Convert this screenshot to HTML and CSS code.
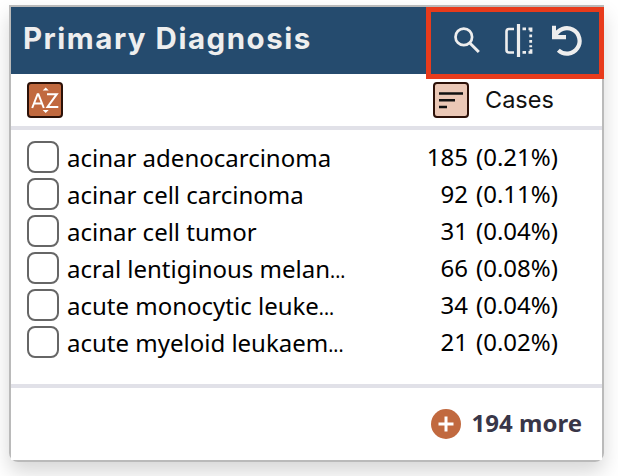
FILE: index.html
```html
<!DOCTYPE html>
<html lang="en">
<head>
<meta charset="utf-8">
<title>Primary Diagnosis</title>
<link rel="stylesheet" href="styles.css">
</head>
<body>
<section class="card">
  <header class="card-header">
    <h2 class="title">Primary Diagnosis</h2>
    <div class="tools">
      <svg class="tool-icons" width="178" height="72" viewBox="426 7 178 72" fill="none" stroke="#eee">
        <circle cx="463.8" cy="36.900" r="8.300" stroke-width="2.700"/>
        <path d="M469.800 43l9 9" stroke-width="3"/>
        <path d="M514 29h-5q-2.500 0-2.500 2.500v18.500q0 2.500 2.500 2.500h5" stroke-width="2.600"/>
        <path d="M518.500 24v33" stroke-width="3.200"/>
        <path d="M522.500 28.800h3.500M528.500 28.800h2.500v3M522.500 52.300h3.500M528.500 52.300h2.500v-3M530.700 34.500v2.800M530.700 40v2.800M530.700 45.200v2" stroke-width="2.800"/>
        <path d="M555 36.500A12.700 12.700 0 1 1 558.300 50.300" stroke-width="4.200"/>
        <path d="M552 25.800h4v9.200h10v4.200h-14z" fill="#eee" stroke="none"/>
      </svg>
    </div>
  </header>
  <div class="columns">
    <button class="sort sort-name" aria-label="Sort by name">
      <svg width="32" height="32" viewBox="0 0 32 32" fill="none" stroke="#fff" stroke-width="2">
        <path d="M3.200 24L8.600 10.200h.8L14.800 24M5.200 19.500h7.600M18 10.200h9.800L18.500 23h10.800"/>
        <path d="M13.700 6.500L16.700 3.500l3 3zM13.700 26L16.700 29l3-3z" fill="#fff" stroke="none"/>
      </svg>
    </button>
    <div class="count-head">
      <button class="sort sort-count" aria-label="Sort by cases">
        <svg width="32" height="32" viewBox="0 0 32 32" stroke="#111" stroke-width="2.500"><path d="M4 9.500h24M4 16.200h16M4 23h8"/></svg>
      </button>
      <span class="cases">Cases</span>
    </div>
  </div>
  <ul class="rows">
    <li><i class="check"></i><span class="name">acinar adenocarcinoma</span><span class="count">185</span><span class="pct">(0.21%)</span></li>
    <li><i class="check"></i><span class="name">acinar cell carcinoma</span><span class="count">92</span><span class="pct">(0.11%)</span></li>
    <li><i class="check"></i><span class="name">acinar cell tumor</span><span class="count">31</span><span class="pct">(0.04%)</span></li>
    <li><i class="check"></i><span class="name">acral lentiginous melan<span class="dots">...</span></span><span class="count">66</span><span class="pct">(0.08%)</span></li>
    <li><i class="check"></i><span class="name">acute monocytic leuke<span class="dots">...</span></span><span class="count">34</span><span class="pct">(0.04%)</span></li>
    <li><i class="check"></i><span class="name">acute myeloid leukaem<span class="dots">...</span></span><span class="count">21</span><span class="pct">(0.02%)</span></li>
  </ul>
  <footer class="more">
    <svg width="30" height="30" viewBox="0 0 30 30"><circle cx="15" cy="15" r="15" fill="#c1693f"/><path d="M7.500 15h15M15 7.500v15" stroke="#fff" stroke-width="3"/></svg>
    <span>194 more</span>
  </footer>
</section>
</body>
</html>
```
FILE: styles.css
```css
* { box-sizing: border-box; }
body { margin: 0; padding: 5px 0 0 9px; height: 476px; overflow: hidden; background: #fff; font-family: "Noto Sans", sans-serif; color: #000; }
.card { width: 595px; height: 457px; border: 2px solid #bababa; border-radius: 0 0 9px 9px; background: #fff; box-shadow: 0 10px 20px rgba(0, 0, 0, .16); }
.card-header { display: flex; justify-content: space-between; height: 67px; background: #254b6e; }
.title { margin: 0; padding-left: 12px; font: 700 29.500px/62px Inter, sans-serif; letter-spacing: 1.5px; color: #eee; white-space: nowrap; }
.tools { flex: none; width: 178px; height: 72px; margin-right: -2px; border: 5px solid #e83b1c; }
.tool-icons { display: block; margin: -5px; }
.columns { display: flex; justify-content: space-between; height: 56px; padding: 8px 49px 0 16px; border-bottom: 4px solid #e1e1e8; }
.sort { width: 36px; height: 36px; padding: 0; border: 2px solid #2c1108; border-radius: 4px; }
.sort svg { display: block; }
.sort-name { background: #c1693f; }
.sort-count { background: #ebc8b6; }
.count-head { display: flex; gap: 16px; width: 120px; }
.cases { font: 400 23.500px/36px Inter, sans-serif; white-space: nowrap; color: #111; }
.rows { list-style: none; margin: 0; padding: 10px 43px 0 16px; height: 258px; border-bottom: 4px solid #e1e1e8; }
.rows li { display: flex; height: 37px; font-size: 24px; line-height: 36px; white-space: nowrap; }
.check { flex: none; width: 32px; height: 32px; margin-top: 1px; border: 2px solid #666; border-radius: 8px; }
.name { width: 330px; padding-left: 8px; }
.dots { font-size: 19px; }
.count { width: 79px; text-align: right; line-height: 34px; }
.pct { width: 91px; padding-left: 8px; line-height: 34px; }
.more { display: flex; justify-content: flex-end; align-items: center; gap: 11px; height: 72px; padding-right: 20px; font-size: 24px; line-height: 30px; font-weight: 700; color: #393648; background: #fff; }
.more span { padding-bottom: 2px; }
```
